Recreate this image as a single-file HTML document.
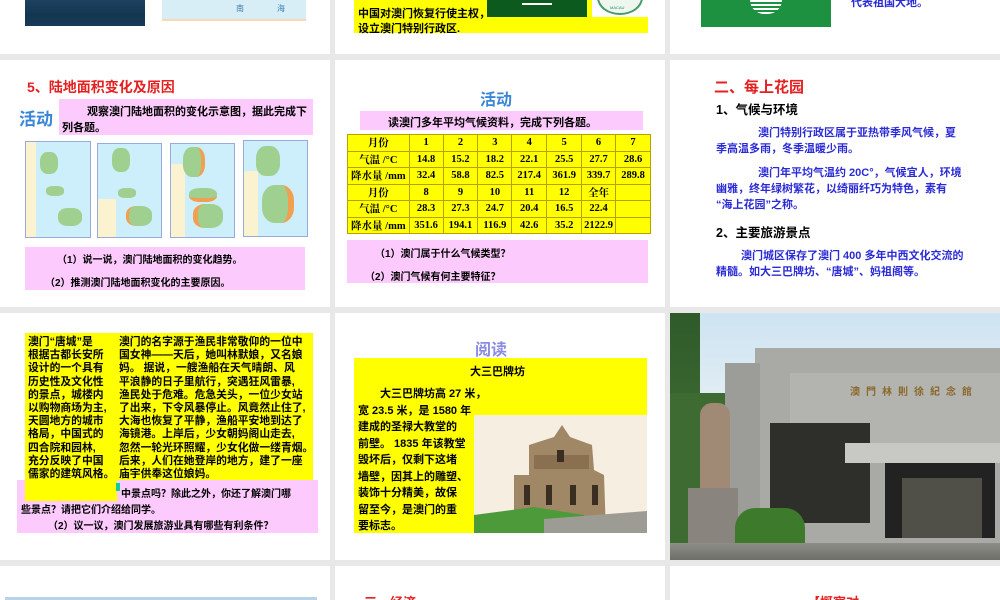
<!DOCTYPE html>
<html><head><meta charset="utf-8">
<style>
*{margin:0;padding:0;box-sizing:border-box}
body{width:1000px;height:600px;background:#e8e8e8;position:relative;overflow:hidden;font-family:"Liberation Sans","Noto Sans CJK SC",sans-serif}
.s{position:absolute;background:#fff;overflow:hidden}
.a{position:absolute}
.t{position:absolute;white-space:nowrap}
table{border-collapse:collapse;position:absolute;left:347px;top:134px;width:304px;background:#ffff00;font-family:"Liberation Serif","Noto Serif CJK SC",serif;font-weight:bold;font-size:10.5px}
td{border:1px solid #b8a000;height:16.5px;text-align:center;padding:0}
.y{background:#ffff00}
.p{background:#fccafc}
.blue{color:#2b2bd6;font-weight:bold;font-size:11px}
.map{position:absolute;background:#cdeefb;border:1px solid #9ad;overflow:hidden}
.col div{white-space:nowrap}
</style></head><body>

<!-- row 1 -->
<div class="s" style="left:0;top:0;width:330px;height:54px">
 <div class="a" style="left:25px;top:0;width:120px;height:26px;background:linear-gradient(180deg,#1c4260,#143650 60%,#173a58)"></div>
 <div class="a" style="left:162px;top:0;width:144px;height:21px;background:#d8eef6;border-bottom:2px solid #f3d9b8"></div>
 <div class="t" style="left:236px;top:3px;font-size:8px;color:#3a7ab0">南</div>
 <div class="t" style="left:277px;top:3px;font-size:8px;color:#3a7ab0">海</div>
</div>
<div class="s" style="left:335px;top:0;width:330px;height:54px">
 <div class="a y" style="left:19px;top:0;width:294px;height:33px"></div>
 <div class="t" style="left:23px;top:5px;font-size:11px;font-weight:bold">中国对澳门恢复行使主权，</div>
 <div class="t" style="left:23px;top:20px;font-size:11px;font-weight:bold">设立澳门特别行政区.</div>
 <div class="a" style="left:152px;top:0;width:100px;height:17px;background:#0c5a1e"></div>
 <div class="a" style="left:187px;top:0;width:30px;height:5px;border-bottom:2px solid #fff"></div>
 <div class="a" style="left:257px;top:0;width:56px;height:17px;background:#fff"></div>
 <div class="a" style="left:262px;top:-20px;width:46px;height:35px;border-radius:50%;border:2px solid #4a9a6a;background:#eef7ee"></div>
 <div class="t" style="left:275px;top:5px;font-size:4px;color:#287">MACAU</div>
</div>
<div class="s" style="left:670px;top:0;width:330px;height:54px">
 <div class="a" style="left:31px;top:0;width:130px;height:27px;background:#1d9140"></div>
 <div class="a" style="left:80px;top:0;width:32px;height:14px;border-radius:0 0 16px 16px;background:repeating-linear-gradient(180deg,#fff 0 2px,#1d9140 2px 4px)"></div>
 <div class="t" style="left:181px;top:-6px;font-size:11px;color:#2b2bd6;font-weight:bold">代表祖国大地。</div>
</div>

<!-- row 2 -->
<div class="s" style="left:0;top:60px;width:330px;height:247px">
 <div class="t" style="left:27px;top:17px;font-size:14px;font-weight:bold;color:#e52020">5、陆地面积变化及原因</div>
 <div class="t" style="left:19px;top:45px;font-size:17px;font-weight:bold;color:#3a86d6">活动</div>
 <div class="a p" style="left:59px;top:39px;width:254px;height:36px"></div>
 <div class="t" style="left:87px;top:43px;font-size:11px;font-weight:bold">观察澳门陆地面积的变化示意图，据此完成下</div>
 <div class="t" style="left:62px;top:59px;font-size:11px;font-weight:bold">列各题。</div>
 <div class="map" style="left:25px;top:81px;width:66px;height:97px"><div class="a" style="left:0;top:0;width:10px;height:97px;background:#fbf3d0"></div><div class="a" style="left:14px;top:10px;width:18px;height:22px;background:#9fd08f;border-radius:40%"></div><div class="a" style="left:20px;top:44px;width:18px;height:10px;background:#9fd08f;border-radius:40%"></div><div class="a" style="left:32px;top:66px;width:24px;height:18px;background:#9fd08f;border-radius:40%"></div></div>
 <div class="map" style="left:97px;top:83px;width:65px;height:95px"><div class="a" style="left:0;top:55px;width:18px;height:40px;background:#fbf3d0"></div><div class="a" style="left:14px;top:4px;width:18px;height:24px;background:#9fd08f;border-radius:40%"></div><div class="a" style="left:20px;top:44px;width:18px;height:10px;background:#9fd08f;border-radius:40%"></div><div class="a" style="left:28px;top:62px;width:26px;height:20px;background:#9fd08f;border-radius:40%;border-left:3px solid #f0a050"></div></div>
 <div class="map" style="left:170px;top:83px;width:65px;height:95px"><div class="a" style="left:0;top:20px;width:14px;height:75px;background:#fbf3d0"></div><div class="a" style="left:12px;top:3px;width:22px;height:30px;background:#9fd08f;border-radius:40%;border-right:4px solid #f0a050"></div><div class="a" style="left:18px;top:44px;width:28px;height:14px;background:#9fd08f;border-radius:40%;border-bottom:4px solid #f0a050"></div><div class="a" style="left:22px;top:60px;width:30px;height:24px;background:#9fd08f;border-radius:40%;border-left:5px solid #f0a050"></div></div>
 <div class="map" style="left:243px;top:80px;width:65px;height:97px"><div class="a" style="left:0;top:30px;width:14px;height:67px;background:#fbf3d0"></div><div class="a" style="left:12px;top:5px;width:24px;height:30px;background:#9fd08f;border-radius:40%"></div><div class="a" style="left:18px;top:44px;width:32px;height:38px;background:#9fd08f;border-radius:40%;border-right:6px solid #f0a050"></div></div>
 <div class="a p" style="left:25px;top:187px;width:280px;height:43px"></div>
 <div class="t" style="left:57px;top:191px;font-size:10px;font-weight:bold">（1）说一说，澳门陆地面积的变化趋势。</div>
 <div class="t" style="left:45px;top:214px;font-size:10px;font-weight:bold">（2）推测澳门陆地面积变化的主要原因。</div>
</div>

<div class="s" style="left:335px;top:60px;width:330px;height:247px">
 <div class="t" style="left:145px;top:26px;font-size:16px;font-weight:bold;color:#3a86d6">活动</div>
 <div class="a p" style="left:25px;top:51px;width:283px;height:19px"></div>
 <div class="t" style="left:53px;top:54px;font-size:11px;font-weight:bold">读澳门多年平均气候资料，完成下列各题。</div>
 <div class="a p" style="left:12px;top:180px;width:301px;height:43px"></div>
 <div class="t" style="left:40px;top:185px;font-size:10px;font-weight:bold">（1）澳门属于什么气候类型？</div>
 <div class="t" style="left:30px;top:208px;font-size:10px;font-weight:bold">（2）澳门气候有何主要特征？</div>
</div>
<table>
<colgroup><col style="width:62px"><col style="width:34px"><col style="width:35px"><col style="width:34px"><col style="width:35px"><col style="width:35px"><col style="width:34px"><col style="width:35px"></colgroup>
<tr><td>月份</td><td>1</td><td>2</td><td>3</td><td>4</td><td>5</td><td>6</td><td>7</td></tr>
<tr><td>气温 /°C</td><td>14.8</td><td>15.2</td><td>18.2</td><td>22.1</td><td>25.5</td><td>27.7</td><td>28.6</td></tr>
<tr><td>降水量 /mm</td><td>32.4</td><td>58.8</td><td>82.5</td><td>217.4</td><td>361.9</td><td>339.7</td><td>289.8</td></tr>
<tr><td>月份</td><td>8</td><td>9</td><td>10</td><td>11</td><td>12</td><td>全年</td><td></td></tr>
<tr><td>气温 /°C</td><td>28.3</td><td>27.3</td><td>24.7</td><td>20.4</td><td>16.5</td><td>22.4</td><td></td></tr>
<tr><td>降水量 /mm</td><td>351.6</td><td>194.1</td><td>116.9</td><td>42.6</td><td>35.2</td><td>2122.9</td><td></td></tr>
</table>

<div class="s" style="left:670px;top:60px;width:330px;height:247px">
 <div class="t" style="left:44px;top:16px;font-size:15px;font-weight:bold;color:#e52020">二、每上花园</div>
 <div class="t" style="left:46px;top:39px;font-size:12.5px;font-weight:bold">1、气候与环境</div>
 <div class="t blue" style="left:88px;top:64px">澳门特别行政区属于亚热带季风气候，夏</div>
 <div class="t blue" style="left:46px;top:80px">季高温多雨，冬季温暖少雨。</div>
 <div class="t blue" style="left:88px;top:104px">澳门年平均气温约 20C°，气候宜人，环境</div>
 <div class="t blue" style="left:46px;top:120px">幽雅，终年绿树繁花，以绮丽纤巧为特色，素有</div>
 <div class="t blue" style="left:46px;top:136px">“海上花园”之称。</div>
 <div class="t" style="left:46px;top:162px;font-size:12.5px;font-weight:bold">2、主要旅游景点</div>
 <div class="t blue" style="left:71px;top:187px">澳门城区保存了澳门 400 多年中西文化交流的</div>
 <div class="t blue" style="left:46px;top:203px">精髓。如大三巴牌坊、“唐城”、妈祖阁等。</div>
</div>

<!-- row 3 -->
<div class="s" style="left:0;top:313px;width:330px;height:247px;font-size:10.8px;font-weight:bold;line-height:13.2px">
 <div class="a y" style="left:25px;top:20px;width:288px;height:147px"></div>
 <div class="a p" style="left:17px;top:167px;width:301px;height:53px"></div>
 <div class="a y" style="left:25px;top:160px;width:92px;height:28px"></div>
 <div class="a" style="left:116px;top:170px;width:4px;height:8px;background:#1c9"></div>
 <div class="a col" style="left:28px;top:23px;width:90px"><div>澳门“唐城”是</div><div>根据古都长安所</div><div>设计的一个具有</div><div>历史性及文化性</div><div>的景点，城楼内</div><div>以购物商场为主,</div><div>天圆地方的城市</div><div>格局，中国式的</div><div>四合院和园林,</div><div>充分反映了中国</div><div>儒家的建筑风格。</div></div>
 <div class="a col" style="left:119px;top:23px;width:200px"><div>澳门的名字源于渔民非常敬仰的一位中</div><div>国女神——天后，她叫林默娘，又名娘</div><div>妈。 据说，一艘渔船在天气晴朗、风</div><div>平浪静的日子里航行，突遇狂风雷暴,</div><div>渔民处于危难。危急关头，一位少女站</div><div>了出来，下令风暴停止。风竟然止住了,</div><div>大海也恢复了平静，渔船平安地到达了</div><div>海镜港。上岸后，少女朝妈阁山走去,</div><div>忽然一轮光环照耀，少女化做一缕青烟。</div><div>后来，人们在她登岸的地方，建了一座</div><div>庙宇供奉这位娘妈。</div></div>
 <div class="t" style="left:121px;top:175px;font-size:10px">中景点吗？除此之外，你还了解澳门哪</div>
 <div class="t" style="left:21px;top:191px;font-size:10px">些景点？请把它们介绍给同学。</div>
 <div class="t" style="left:48px;top:207px;font-size:10px">（2）议一议，澳门发展旅游业具有哪些有利条件？</div>
</div>

<div class="s" style="left:335px;top:313px;width:330px;height:247px">
 <div class="t" style="left:140px;top:23px;font-size:16px;font-weight:bold;color:#8a8ae0">阅读</div>
 <div class="a y" style="left:19px;top:45px;width:293px;height:175px"></div>
 <div class="t" style="left:135px;top:50px;font-size:11px;font-weight:bold">大三巴牌坊</div>
 <div class="a" style="left:139px;top:102px;width:173px;height:118px;background:#f7eee2"></div>
 <svg class="a" style="left:139px;top:102px" width="173" height="118" viewBox="0 0 173 118">
  <polygon points="40,60 55,60 55,30 80,22 88,10 96,22 118,30 120,55 130,60 132,118 40,118" fill="#a08866"/>
  <rect x="60" y="40" width="55" height="14" fill="#8a7050"/>
  <rect x="50" y="70" width="6" height="20" fill="#3a2e22"/><rect x="72" y="70" width="6" height="20" fill="#3a2e22"/><rect x="96" y="70" width="6" height="20" fill="#3a2e22"/><rect x="118" y="70" width="6" height="20" fill="#3a2e22"/>
  <rect x="83" y="35" width="7" height="12" fill="#3a2e22"/>
  <polygon points="0,100 60,92 110,100 110,118 0,118" fill="#4d9a3a"/>
  <polygon points="70,104 173,96 173,118 70,118" fill="#9c9c94"/>
 </svg>
 <div style="position:absolute;left:23px;top:73px;font-size:11px;font-weight:bold;line-height:16.5px">
  <div style="padding-left:22px">大三巴牌坊高 27 米，</div>
  <div>宽 23.5 米，是 1580 年</div><div>建成的圣禄大教堂的</div><div>前壁。 1835 年该教堂</div><div>毁坏后，仅剩下这堵</div><div>墙壁，因其上的雕塑、</div><div>装饰十分精美，故保</div><div>留至今，是澳门的重</div><div>要标志。</div>
 </div>
</div>

<div class="s" style="left:670px;top:313px;width:330px;height:247px;background:linear-gradient(180deg,#cde4f2,#e4eef4 40%)">
 <div class="a" style="left:0;top:0;width:30px;height:240px;background:linear-gradient(180deg,#2f5a2a,#4a7a3a)"></div>
 <div class="a" style="left:0;top:80px;width:60px;height:160px;background:#3d6b32"></div>
 <div class="a" style="left:85px;top:35px;width:245px;height:200px;background:#a9a9a6"></div>
 <div class="a" style="left:55px;top:50px;width:35px;height:180px;background:#9c9c98"></div>
 <div class="a" style="left:120px;top:60px;width:210px;height:70px;background:#b3b3b0"></div>
 <div class="a" style="left:100px;top:110px;width:100px;height:100px;background:#2e2e2a"></div>
 <div class="a" style="left:175px;top:130px;width:155px;height:20px;background:#c8c8c4"></div>
 <div class="a" style="left:215px;top:150px;width:110px;height:75px;background:#222"></div>
 <div class="a" style="left:232px;top:165px;width:80px;height:60px;background:#505048"></div>
 <div class="t" style="left:180px;top:70px;font-size:10px;color:#8a6a2a;letter-spacing:6px;font-weight:bold">澳門林則徐紀念館</div>
 <div class="a" style="left:30px;top:90px;width:30px;height:100px;background:#a08a76;border-radius:12px 12px 2px 2px"></div>
 <div class="a" style="left:18px;top:175px;width:50px;height:65px;background:#8a847e"></div>
 <div class="a" style="left:65px;top:195px;width:70px;height:35px;background:#3e7a2c;border-radius:20px 20px 0 0"></div>
 <div class="a" style="left:0;top:230px;width:330px;height:17px;background:linear-gradient(180deg,#8e8e88,#6e6e68)"></div>
</div>

<!-- row 4 -->
<div class="s" style="left:0;top:566px;width:330px;height:34px">
 <div class="a" style="left:5px;top:31px;width:312px;height:3px;background:#b7d3e8"></div>
</div>
<div class="s" style="left:335px;top:566px;width:330px;height:34px">
 <div class="t" style="left:29px;top:26px;font-size:13px;font-weight:bold;color:#e52020">三、经济</div>
</div>
<div class="s" style="left:670px;top:566px;width:330px;height:34px">
 <div class="t" style="left:137px;top:26px;font-size:13px;font-weight:bold;color:#e52020">【概察对</div>
</div>
</body></html>
